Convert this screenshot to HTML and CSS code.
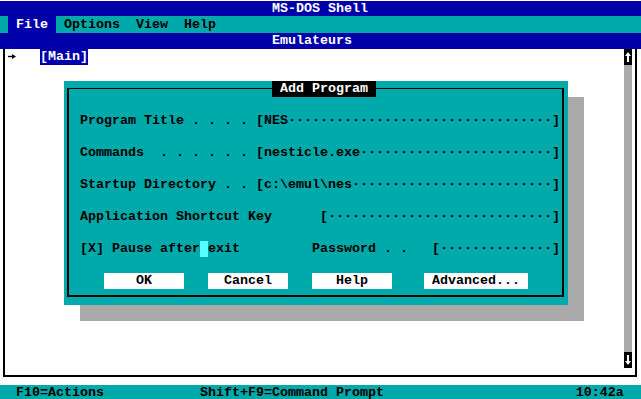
FILE: index.html
```html
<!DOCTYPE html>
<html lang="en">
<head>
  <meta charset="utf-8">
  <title>MS-DOS Shell - Add Program</title>
  <link rel="stylesheet" href="styles.css">
</head>
<body>
  <div class="screen">
    <div class="titlebar">MS-DOS Shell</div>

    <div class="menubar">
      <span class="menu-item active">File</span>
      <span class="menu-item">Options</span>
      <span class="menu-item">View</span>
      <span class="menu-item">Help</span>
    </div>

    <div class="pathbar">Emulateurs</div>

    <div class="panel">
      <div class="listbox">
        <div class="list">
          <div class="list-row">
            <svg class="pointer" viewBox="0 0 8 16" width="8" height="16">
              <path d="M0 7.5h5" stroke="#000" stroke-width="1.4"/>
              <path d="M4 5l4 2.5-4 2.5z" fill="#000"/>
            </svg>
            <span class="group selected">[Main]</span>
          </div>
        </div>
        <div class="scrollbar">
          <div class="scroll-btn">
            <svg viewBox="0 0 8 16" width="8" height="16">
              <path d="M4 3l3 4H5v6H3V7H1z" fill="#fff"/>
            </svg>
          </div>
          <div class="scroll-track"></div>
          <div class="scroll-btn">
            <svg viewBox="0 0 8 16" width="8" height="16">
              <path d="M4 13l3-4H5V3H3v6H1z" fill="#fff"/>
            </svg>
          </div>
        </div>
      </div>

      <!-- Add Program dialog, drawn over the file list -->
      <div class="dialog">
        <div class="dialog-title"> Add Program </div>
        <div class="dialog-frame">
          <div class="field">Program Title . . . . [NES·································]</div>
          <div class="field">Commands  . . . . . . [nesticle.exe························]</div>
          <div class="field">Startup Directory . . [c:\emul\nes·························]</div>
          <div class="field">Application Shortcut Key      [····························]</div>
          <div class="field">[X] Pause after<span class="cursor"></span>exit         Password . .   [··············]</div>
          <div class="field">   <span class="btn">    OK    </span>   <span class="btn">  Cancel  </span>   <span class="btn">   Help   </span>    <span class="btn"> Advanced... </span></div>
        </div>
      </div>
    </div>

    <div class="statusbar">  F10=Actions            Shift+F9=Command Prompt                        10:42a</div>
  </div>
</body>
</html>
```

FILE: styles.css
```css
body {
  margin: 0;
  padding: 0;
  background-color: #fff;
}

.screen {
  width: 641px;
  height: 399px;
  overflow: hidden;
  background-color: #fff;
  color: #000;
  font-family: 'Liberation Mono', 'DejaVu Sans Mono', monospace;
  font-weight: bold;
  font-size: 13.33px;
  line-height: 16px;
}

.titlebar {
  margin-top: 1px;
  height: 15px;
  line-height: 15px;
  background-color: #0000aa;
  color: #fff;
  text-align: center;
  padding-right: 1px;
}

.menubar {
  display: flex;
  height: 17px;
  line-height: 17px;
  padding-left: 8px;
  background-color: #00aaaa;
}

.menu-item {
  padding: 0 8px;
  white-space: pre;
}

.menu-item.active {
  background-color: #0000aa;
  color: #fff;
}

.pathbar {
  height: 16px;
  padding-right: 17px;
  background-color: #0000aa;
  color: #fff;
  text-align: center;
}

.panel {
  position: relative;
  height: 336px;
}

.listbox {
  display: flex;
  height: 326px;
  margin: 0 4px 0 3px;
  border: solid #000;
  border-width: 0 2px 2px 2px;
}

.list {
  flex: 1;
  padding-left: 3px;
}

.list-row {
  display: flex;
  height: 16px;
}

.pointer {
  flex: none;
}

.group {
  margin-left: 24px;
  white-space: pre;
}

.selected {
  background-color: #0000aa;
  color: #fff;
}

.scrollbar {
  display: flex;
  flex-direction: column;
  width: 8px;
  margin: 0 3px 7px 0;
}

.scroll-btn {
  height: 16px;
  background-color: #000;
}

.scroll-btn svg {
  display: block;
}

.scroll-track {
  flex: 1;
  background-color: #aaa;
}

.dialog {
  position: absolute;
  left: 64px;
  top: 32px;
  width: 504px;
  height: 224px;
  box-sizing: border-box;
  padding: 7px 4px 8px 3px;
  background-color: #00aaaa;
  box-shadow: 16px 16px 0 #aaa;
}

.dialog-title {
  position: absolute;
  left: 208px;
  top: 0;
  height: 16px;
  background-color: #000;
  color: #fff;
  white-space: pre;
}

.dialog-frame {
  display: flex;
  flex-direction: column;
  gap: 16px;
  height: 100%;
  box-sizing: border-box;
  padding: 24px 0 0 11px;
  border: solid #000;
  border-width: 1px 2px 2px 2px;
}

.field {
  height: 16px;
  white-space: pre;
}

.cursor {
  display: inline-block;
  width: 8px;
  height: 16px;
  vertical-align: top;
  background-color: #55ffff;
}

.btn {
  display: inline-block;
  height: 16px;
  vertical-align: top;
  background-color: #fff;
}

.statusbar {
  height: 15px;
  line-height: 15px;
  background-color: #00aaaa;
  white-space: pre;
}
```
